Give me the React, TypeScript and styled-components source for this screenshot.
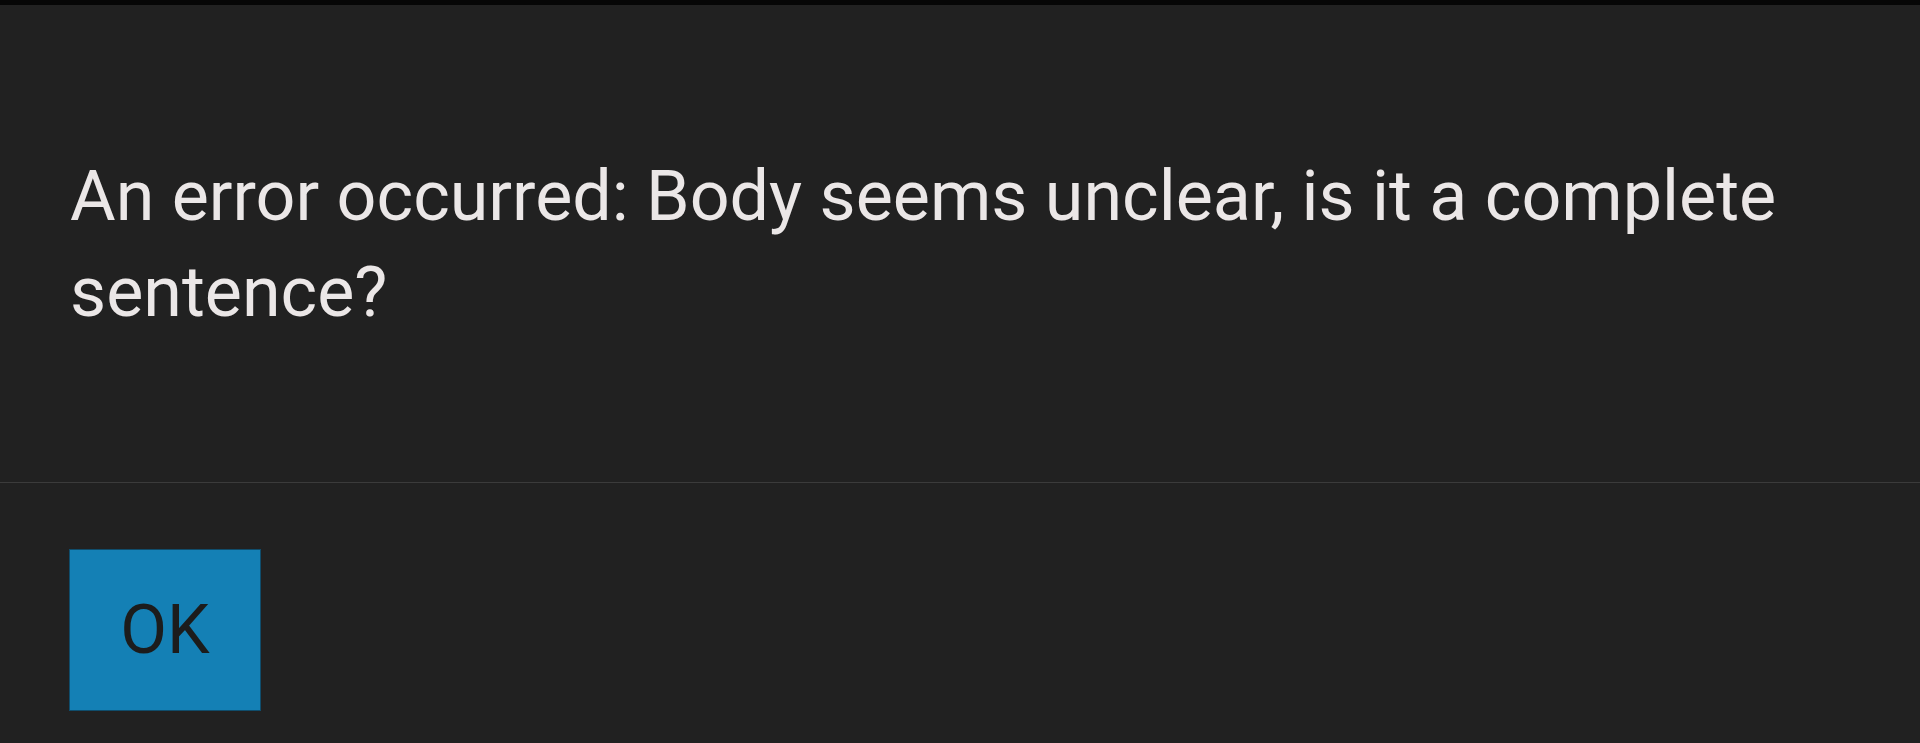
import React from 'react'
import styled, { createGlobalStyle } from 'styled-components'

const GlobalStyle = createGlobalStyle`
  html, body {
    margin: 0;
    padding: 0;
    background: #212121;
  }
  body {
    font-family: Roboto, "Liberation Sans", sans-serif;
  }
`

export default function App() {
  return (
    <>
      <GlobalStyle />
      <Dialog>
        <Message>
          <Text>An error occurred: Body seems unclear, is it a complete sentence?</Text>
        </Message>
        <Footer>
          <OkButton type="button">OK</OkButton>
        </Footer>
      </Dialog>
    </>
  )
}

/* Styles */

const Dialog = styled.div`
  display: flex;
  flex-direction: column;
  height: 743px;
  box-sizing: border-box;
  border-top: 5px solid #060606;
  background: #212121;
  overflow: hidden;
`

const Message = styled.div`
  height: 478px;
  box-sizing: border-box;
  padding: 143px 80px 0 70px;
  border-bottom: 1px solid #3b3b3b;
`

const Text = styled.p`
  margin: 0;
  max-width: 1740px;
  color: #ebe7e7;
  font-size: 70px;
  line-height: 96px;
  font-weight: 400;
`

const Footer = styled.div`
  display: flex;
  padding: 66px 0 0 69px;
`

const OkButton = styled.button`
  width: 192px;
  height: 162px;
  box-sizing: border-box;
  display: flex;
  align-items: center;
  justify-content: center;
  padding: 0;
  border: 1px solid #0f4d6c;
  background: #1480b5;
  color: #1c1c1c;
  font-family: Roboto, "Liberation Sans", sans-serif;
  font-size: 68px;
  font-weight: 400;
  cursor: pointer;
`
